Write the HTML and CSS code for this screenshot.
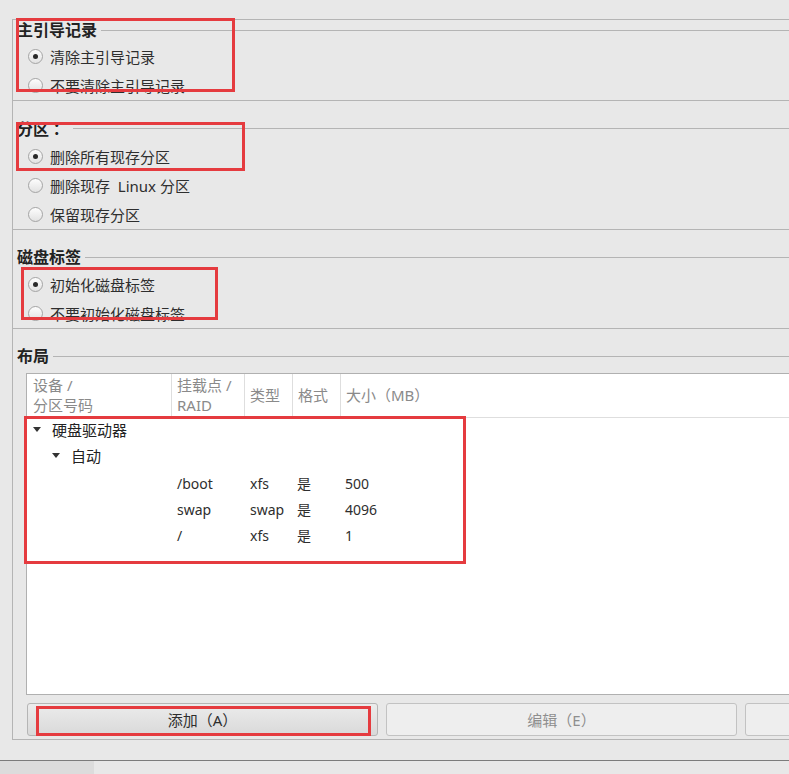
FILE: index.html
```html
<!DOCTYPE html>
<html lang="zh-CN">
<head>
<meta charset="utf-8">
<title>分区</title>
<link rel="stylesheet" href="styles.css">
</head>
<body>
<div class="frame">
  <section class="group g1">
    <div class="gtitle"><span>主引导记录</span></div>
    <div class="radio"><span class="r on"></span>清除主引导记录</div>
    <div class="radio"><span class="r"></span>不要清除主引导记录</div>
  </section>
  <section class="group g2">
    <div class="gtitle"><span class="cjk">分区 ：</span></div>
    <div class="radio"><span class="r on"></span>删除所有现存分区</div>
    <div class="radio"><span class="r"></span>删除现存&nbsp; Linux 分区</div>
    <div class="radio"><span class="r"></span>保留现存分区</div>
  </section>
  <section class="group g3">
    <div class="gtitle"><span>磁盘标签</span></div>
    <div class="radio"><span class="r on"></span>初始化磁盘标签</div>
    <div class="radio"><span class="r"></span>不要初始化磁盘标签</div>
  </section>
  <section class="group g4">
    <div class="gtitle"><span>布局</span></div>
    <div class="tree">
      <div class="thead cols">
        <div class="th c1">设备 /<br>分区号码</div>
        <div class="th">挂载点 /<br>RAID</div>
        <div class="th">类型</div>
        <div class="th">格式</div>
        <div class="th last">大小（MB）</div>
      </div>
      <div class="node lvl1"><span class="tri"></span>硬盘驱动器</div>
      <div class="node lvl2"><span class="tri"></span>自动</div>
      <div class="cols drow"><div></div><div>/boot</div><div>xfs</div><div>是</div><div>500</div></div>
      <div class="cols drow"><div></div><div>swap</div><div>swap</div><div>是</div><div>4096</div></div>
      <div class="cols drow"><div></div><div>/</div><div>xfs</div><div>是</div><div>1</div></div>
    </div>
    <div class="buttons">
      <button class="btn add">添加（A）</button>
      <button class="btn dis">编辑（E）</button>
      <button class="btn dis"></button>
    </div>
  </section>
</div>
<div class="statusbar"><div class="tab"></div></div>

<div class="mark m1"></div>
<div class="mark m2"></div>
<div class="mark m3"></div>
<div class="mark m4"></div>
<div class="mark m5"></div>
</body>
</html>
```
FILE: styles.css
```css
html, body {
  margin: 0;
  padding: 0;
  background: #e8e8e8;
  overflow: hidden;
}
body {
  position: relative;
  width: 789px;
  height: 774px;
  font-family: "Noto Sans", "Noto Sans CJK SC", sans-serif;
  font-size: 15px;
  color: #2e2e2e;
}
.cjk {
  font-family: "Noto Sans CJK SC", sans-serif;
}
.frame {
  margin: 19px 0 0 12px;
  width: 920px;
  border-top: 1px solid #b4b4b4;
  border-left: 1px solid #b4b4b4;
  border-bottom: 1px solid #b4b4b4;
}
.group {
  border-bottom: 1px solid #b4b4b4;
}
.g2, .g3, .g4 { padding-top: 17px; }
.g4 { border-bottom: none; padding-bottom: 3px; }
.gtitle {
  display: flex;
  align-items: center;
  height: 20px;
  line-height: 20px;
  padding-left: 4px;
  font-size: 16px;
  font-weight: bold;
  color: #222;
}
.gtitle::after {
  content: "";
  flex: 1;
  height: 1px;
  background: #b4b4b4;
  margin-left: 4px;
}
.g1 .gtitle { margin-bottom: 2px; }
.g2 .gtitle { margin-bottom: 4px; }
.g3 .gtitle { margin-bottom: 3px; }
.radio {
  display: flex;
  align-items: center;
  gap: 7px;
  height: 29px;
  padding-left: 15px;
  color: #2e2e2e;
}
.r {
  position: relative;
  flex: none;
  width: 13px;
  height: 13px;
  border: 1px solid #a4a4a4;
  border-radius: 50%;
  background: linear-gradient(#fdfdfd, #e2e2e2);
}
.r.on::after {
  content: "";
  position: absolute;
  left: 4px;
  top: 4px;
  width: 5px;
  height: 5px;
  border-radius: 50%;
  background: #2a2a2a;
}
.tree {
  margin: 7px 0 0 13px;
  width: 820px;
  height: 322px;
  box-sizing: border-box;
  background: #fff;
  border: 1px solid #b0b0b0;
}
.cols {
  display: grid;
  grid-template-columns: 145px 73px 48px 48px 1fr;
}
.thead {
  height: 43px;
  border-bottom: 1px solid #dedede;
}
.th {
  display: flex;
  align-items: center;
  padding-left: 5px;
  padding-bottom: 2px;
  border-right: 1px solid #dedede;
  color: #8a8a8a;
  font-size: 15px;
  line-height: 20px;
}
.th.c1 { padding-left: 6px; }
.th.last { border-right: none; }
.node {
  display: flex;
  align-items: center;
  box-sizing: border-box;
  height: 26px;
  padding-bottom: 4px;
  font-size: 15px;
  color: #222;
}
.lvl1 { padding-left: 6px; }
.lvl2 { padding-left: 25px; }
.tri {
  width: 0;
  height: 0;
  border-left: 4px solid transparent;
  border-right: 4px solid transparent;
  border-top: 5px solid #333;
  margin-right: 11px;
}
.drow {
  height: 26px;
  align-items: center;
  font-size: 14px;
  color: #2e2e2e;
}
.drow div { padding-left: 5px; }
.drow div:nth-child(4), .drow div:nth-child(5) { padding-left: 4px; }
.buttons {
  display: flex;
  gap: 8px;
  margin: 8px 0 0 14px;
}
.btn {
  width: 351px;
  height: 33px;
  flex: none;
  border: 1px solid #b5b5b5;
  border-radius: 3px;
  font-family: "Noto Sans", "Noto Sans CJK SC", sans-serif;
  font-size: 15px;
  padding: 0;
}
.btn.add {
  background: linear-gradient(#ececec, #d9d9d9);
  color: #2e2e2e;
}
.btn.dis {
  background: #eeeeee;
  color: #8e8e8e;
  border-color: #c2c2c2;
}
.statusbar {
  margin-top: 20px;
  border-top: 1px solid #7c7c7c;
  height: 13px;
}
.tab {
  width: 94px;
  height: 13px;
  background: #dcdcdc;
}
.mark {
  position: absolute;
  border: 3px solid #e53b3f;
  box-sizing: border-box;
}
.m1 { left: 16px; top: 18px; width: 219px; height: 74px; }
.m2 { left: 16px; top: 122px; width: 229px; height: 49px; }
.m3 { left: 21px; top: 267px; width: 197px; height: 53px; }
.m4 { left: 24px; top: 416px; width: 442px; height: 148px; }
.m5 { left: 36px; top: 706px; width: 335px; height: 30px; }
```
